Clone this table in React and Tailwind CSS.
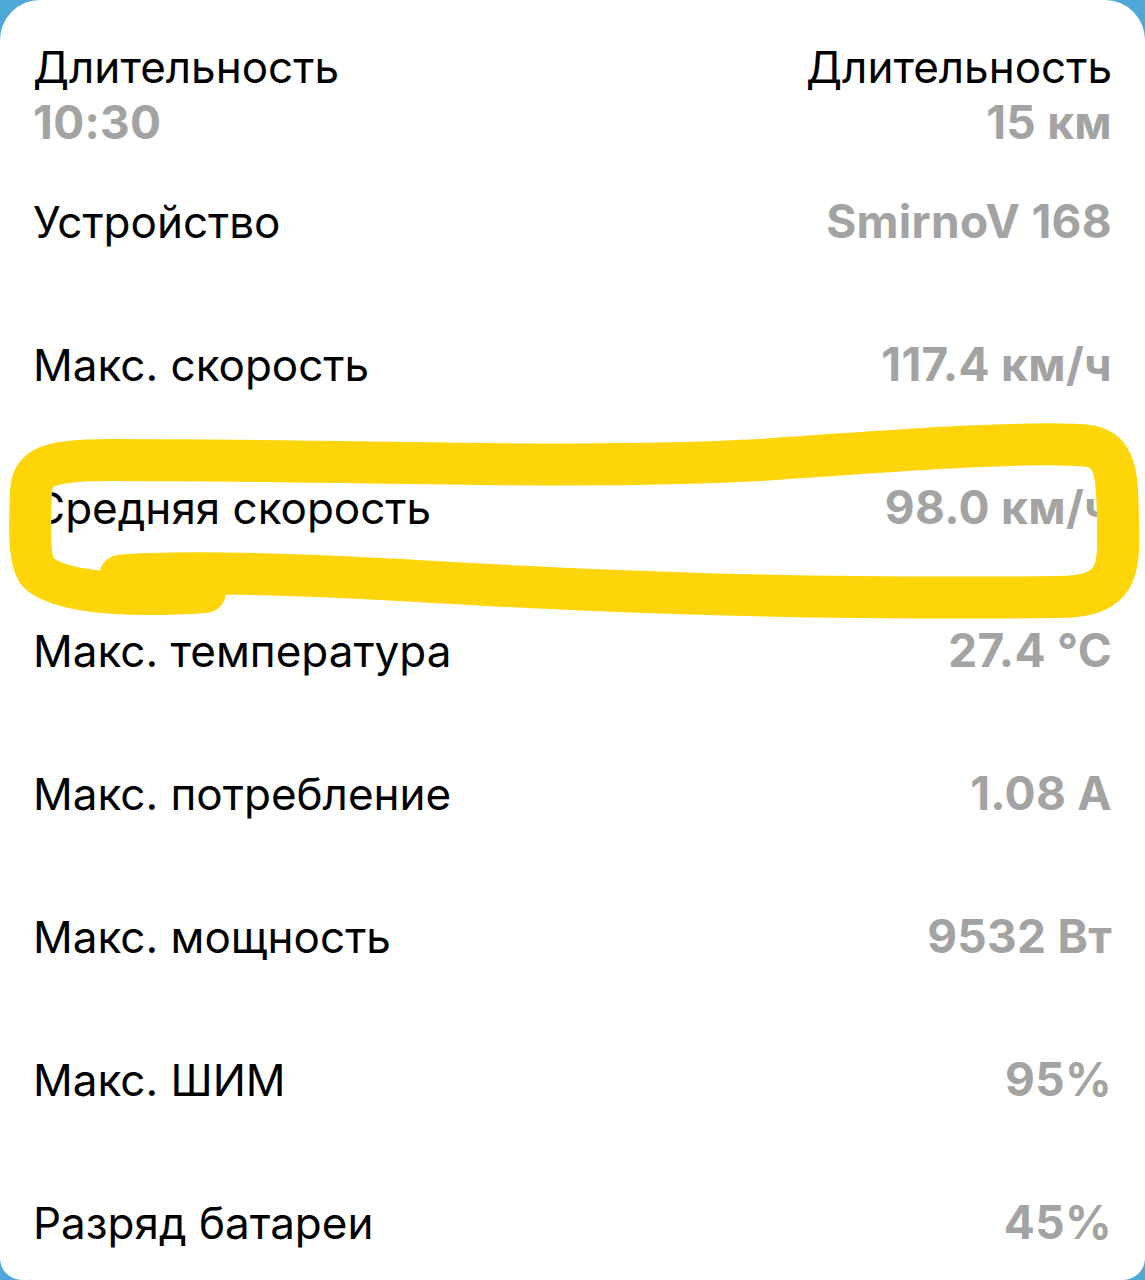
import React from "react";

const rows = [
  ["Устройство", "SmirnoV 168"],
  ["Макс. скорость", "117.4 км/ч"],
  ["Средняя скорость", "98.0 км/ч"],
  ["Макс. температура", "27.4 °C"],
  ["Макс. потребление", "1.08 A"],
  ["Макс. мощность", "9532 Вт"],
  ["Макс. ШИМ", "95%"],
  ["Разряд батареи", "45%"],
];

function Highlight() {
  // hand-drawn yellow loop around the average speed row
  return (
    <svg
      className="absolute left-0 top-0 pointer-events-none"
      width="1145"
      height="1280"
      viewBox="0 0 1145 1280"
    >
      <path
        d="M205 592 C150 596 60 596 38 572 C28 560 30 520 31 492 C32 466 50 460 110 460 C380 460 560 470 760 460 C900 450 1040 440 1090 446 C1118 452 1117 480 1118 520 C1119 570 1120 596 1060 597 C800 600 600 592 400 580 C260 572 160 572 120 576"
        fill="none"
        stroke="#fdd508"
        strokeWidth="42"
        strokeLinecap="round"
        strokeLinejoin="round"
      />
    </svg>
  );
}

export default function App() {
  return (
    <div className="w-[1145px] h-[1280px] bg-[#4ea8d8] overflow-hidden">
      <div
        className="relative w-full h-full bg-white rounded-t-[40px] rounded-b-[22px] px-[33px] pt-[40px]"
        style={{ fontFamily: "Inter, 'Noto Sans', sans-serif" }}
      >
        <div className="flex justify-between text-[44px] leading-[55px]">
          <div>
            <div className="text-black">Длительность</div>
            <div className="font-bold text-[46px] tracking-[0.3px] text-[#a3a3a3]">10:30</div>
          </div>
          <div className="text-right">
            <div className="text-black">Длительность</div>
            <div className="font-bold text-[46px] tracking-[0.3px] text-[#a3a3a3]">15 км</div>
          </div>
        </div>
        {rows.map(([label, value]) => (
          <div
            key={label}
            className="h-[143px] flex items-center justify-between text-[44px]"
          >
            <span className="text-black">{label}</span>
            <span className="font-bold text-[46px] tracking-[0.3px] text-[#a3a3a3]">{value}</span>
          </div>
        ))}
        <Highlight />
      </div>
    </div>
  );
}
